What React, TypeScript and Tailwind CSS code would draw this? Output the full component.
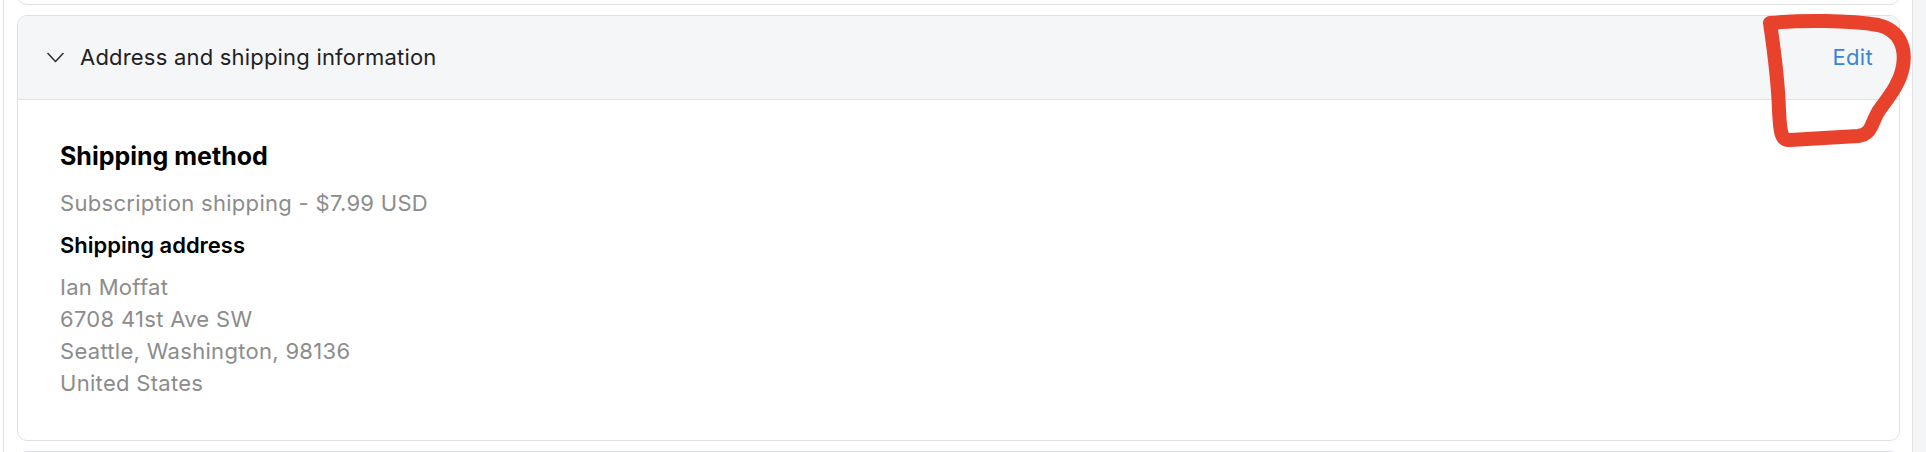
export default function App() {
  return (
    <div className="relative flex h-[452px] w-full overflow-hidden bg-white font-['Inter',sans-serif]">
      <div className="ml-[3px] flex w-[1910px] shrink-0 flex-col border-x border-[#e3e3e3] pl-[13px] pr-[12px]">
        {/* previous card, only its lower edge shows */}
        <div className="-mt-[20px] h-[25px] shrink-0 rounded-[10px] border border-[#dfe1e4]" />

        <section className="mt-[10px] shrink-0 overflow-hidden rounded-[10px] border border-[#dfe1e4]">
          <div className="flex h-[84px] items-center justify-between border-b border-[#dfe1e4] bg-[#f5f6f8] pl-[29px] pr-[26px]">
            <div className="flex items-center gap-[16px]">
              <svg width="17" height="11" viewBox="0 0 17 11" fill="none">
                <path d="M1 1.5 L8.5 9.5 L16 1.5" stroke="#303336" strokeWidth="1.6" strokeLinecap="round" strokeLinejoin="round" />
              </svg>
              <h2 className="text-[22px] tracking-[0.2px] text-[#1f2124]">Address and shipping information</h2>
            </div>
            <button className="text-[22px] tracking-[0.3px] text-[#3a85d8]">Edit</button>
          </div>

          <div className="px-[42px] pb-[41px] pt-[40px]">
            <h3 className="text-[25px] font-bold leading-[32px] text-black">Shipping method</h3>
            <p className="mt-[15px] text-[22px] leading-[32px] tracking-[0.3px] text-[#8c8c8c]">Subscription shipping - $7.99 USD</p>
            <h4 className="mt-[10px] text-[22px] font-semibold leading-[32px] text-black">Shipping address</h4>
            <div className="mt-[10px] text-[22px] leading-[32px] tracking-[0.3px] text-[#8c8c8c]">
              <p>Ian Moffat</p>
              <p>6708 41st Ave SW</p>
              <p>Seattle, Washington, 98136</p>
              <p>United States</p>
            </div>
          </div>
        </section>

        <div className="mt-[10px] h-[40px] shrink-0 rounded-[10px] border border-[#dfe1e4]" />
      </div>
      <div className="flex-1 bg-[#f4f5f7]" />

      {/* hand-drawn red markup around Edit */}
      <svg className="pointer-events-none absolute left-0 top-0" width="1926" height="452" viewBox="0 0 1926 452" fill="none">
        <path
          d="M1770 23 C1800 20 1850 20 1878 25 C1900 30 1906 48 1903 66 C1900 85 1886 100 1878 112 C1871 124 1872 134 1858 136 L1790 140 C1780 141 1780 128 1779 110 C1778 80 1774 50 1770 23 Z"
          stroke="#e8412c"
          strokeWidth="14"
          strokeLinecap="round"
          strokeLinejoin="round"
        />
      </svg>
    </div>
  );
}
